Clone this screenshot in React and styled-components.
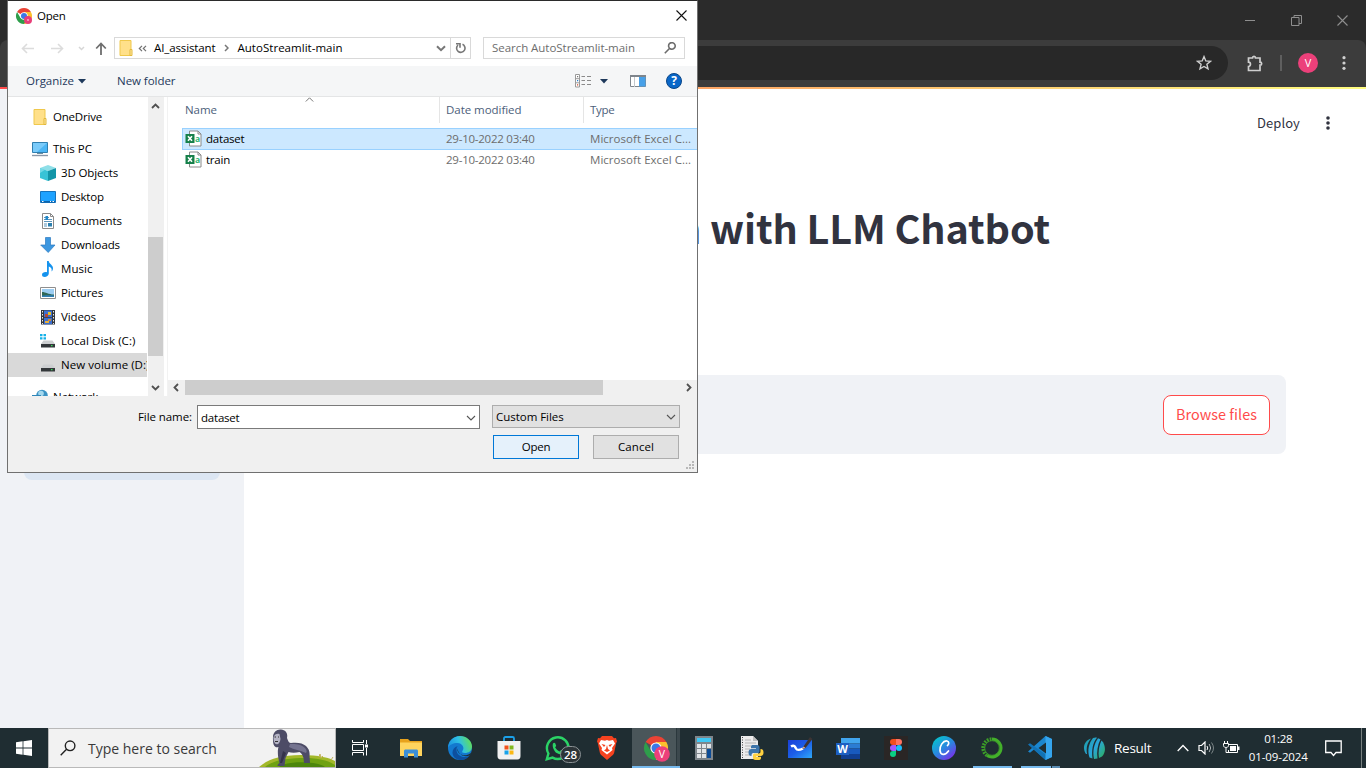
import React from "react";
import styled, { createGlobalStyle } from "styled-components";

const ui = `"Open Sans", "Noto Sans", sans-serif`;
const source = `"Noto Sans CJK JP", "Noto Sans", sans-serif`;

const Global = createGlobalStyle`
  * { box-sizing: border-box; }
  html, body { margin: 0; height: 100%; overflow: hidden; }
  body { font-family: ${ui}; background: #fff; }
  svg { display: block; flex: none; }
`;

const Label = styled.span`
  white-space: nowrap;
  letter-spacing: ${(p) => p.$ls || 0}px;
`;

const Screen = styled.div`
  position: relative;
  display: flex;
  flex-direction: column;
  width: 1366px;
  height: 768px;
  overflow: hidden;
`;

/* ---------- Browser ---------- */

const TabStrip = styled.div`
  height: 40px;
  background: #2b2b2b;
  display: flex;
  justify-content: flex-end;
  align-items: center;
  gap: 35px;
  padding-right: 18px;
`;

const BrowserBar = styled.div`
  height: 47px;
  background: #3c3c3c;
  border-radius: 8px 8px 0 0;
  display: flex;
  align-items: center;
  padding: 0 14px 1px 12px;
`;

const BrowserBarBack = styled.div`
  background: #2b2b2b;
`;

const Omnibox = styled.div`
  width: 1216px;
  height: 34px;
  border-radius: 17px;
  background: #282828;
  display: flex;
  align-items: center;
  justify-content: flex-end;
  padding-right: 16px;
`;

const BarActions = styled.div`
  flex: 1;
  display: flex;
  align-items: center;
  justify-content: flex-end;
`;

const BarDivider = styled.div`
  width: 2px;
  height: 16px;
  background: #5f5f5f;
  margin: 0 16px 0 16px;
`;

const Avatar = styled.div`
  width: 20px;
  height: 20px;
  border-radius: 50%;
  background: #ec407a;
  color: #fff;
  font-size: 11px;
  line-height: 20px;
  text-align: center;
  margin-right: 23px;
`;

const Decoration = styled.div`
  height: 2px;
  background: linear-gradient(90deg, #ff4b4b, #fffd80);
`;

/* ---------- App page ---------- */

const Page = styled.div`
  flex: 1;
  min-height: 0;
  display: flex;
`;

const Aside = styled.div`
  width: 244px;
  background: #f0f2f6;
  padding: 300px 24px 0;
`;

const InfoBox = styled.div`
  height: 91px;
  border-radius: 8px;
  background: #dce6f3;
`;

const Main = styled.div`
  flex: 1;
  display: flex;
  flex-direction: column;
  background: #fff;
`;

const AppHeader = styled.div`
  height: 68px;
  display: flex;
  align-items: center;
  justify-content: flex-end;
  gap: 25px;
  padding-right: 35px;
  font: 400 13px/20px ${source};
  color: #31333f;
`;

const Title = styled.h1`
  margin: 43px 0 0;
  padding-right: 316px;
  height: 57px;
  font: 700 39.6px/54px ${source};
  letter-spacing: -0.13px;
  color: #31333f;
  text-align: right;
  white-space: nowrap;
`;

const Uploader = styled.div`
  margin: 118px 80px 0;
  height: 79px;
  border-radius: 8px;
  background: #f0f2f6;
  display: flex;
  align-items: center;
  justify-content: flex-end;
  padding: 0 16px 0 0;
`;

const Browse = styled.button`
  width: 107px;
  height: 40px;
  padding: 0 0 1px;
  border: 1px solid #ff4b4b;
  border-radius: 8px;
  background: #fff;
  color: #ff4b4b;
  font: 400 14.4px/20px ${source};
`;

/* ---------- File dialog ---------- */

const Dialog = styled.div`
  position: absolute;
  left: 7px;
  top: 0;
  width: 691px;
  height: 473px;
  border: 1px solid #707070;
  border-top-color: #2b2b2b;
  background: #fff;
  display: flex;
  flex-direction: column;
  font-size: 11.5px;
  line-height: 16px;
  color: #000;
`;

const DialogTitle = styled.div`
  height: 30px;
  display: flex;
  align-items: center;
  gap: 5px;
  padding: 0 10px 1px 8px;
  > :last-child { margin-left: auto; }
`;

const NavRow = styled.div`
  height: 35px;
  display: flex;
  align-items: center;
  padding: 0 12px 1px 12px;
`;

const NavArrows = styled.div`
  width: 94px;
  display: flex;
  align-items: center;
`;

const Address = styled.div`
  width: 357px;
  height: 22px;
  border: 1px solid #d9d9d9;
  display: flex;
  align-items: center;
  padding-left: 3px;
`;

const Crumb = styled(Label)`
  margin-left: ${(p) => p.$gap}px;
`;

const AddressEnd = styled.div`
  margin-left: auto;
  display: flex;
  align-items: center;
  height: 100%;
`;

const Refresh = styled.div`
  width: 20px;
  height: 100%;
  border-left: 1px solid #d9d9d9;
  margin-left: 4px;
  display: flex;
  align-items: center;
  justify-content: center;
`;

const SearchField = styled.div`
  margin-left: 12px;
  width: 202px;
  height: 22px;
  border: 1px solid #d9d9d9;
  display: flex;
  align-items: center;
  justify-content: space-between;
  padding: 0 8px 0 8px;
  color: #6d6d6d;
`;

const Toolbar = styled.div`
  height: 31px;
  background: #f5f6f7;
  border-bottom: 1px solid #e4e5e6;
  display: flex;
  align-items: center;
  padding: 0 15px 0 18px;
  color: #1e395b;
`;

const ToolbarRight = styled.div`
  margin-left: auto;
  display: flex;
  align-items: center;
`;

const Gap = styled.div`
  width: ${(p) => p.$w}px;
  flex: none;
`;

const Panes = styled.div`
  height: 299px;
  display: flex;
  overflow: hidden;
`;

const Tree = styled.div`
  width: 139px;
  padding-top: 8px;
  overflow: hidden;
`;

const TreeItem = styled.div`
  height: 24px;
  margin-bottom: ${(p) => (p.$last ? 8 : 0)}px;
  padding-left: ${(p) => (p.$root ? 24 : 32)}px;
  display: flex;
  align-items: center;
  gap: 5px;
  background: ${(p) => (p.$selected ? "#d9d9d9" : "transparent")};
`;

const VScroll = styled.div`
  width: 16px;
  margin-left: 1px;
  background: #f0f0f0;
  display: flex;
  flex-direction: column;
  align-items: center;
  padding-right: 1px;
`;

const VArrow = styled.div`
  height: ${(p) => p.$h}px;
  display: flex;
  align-items: center;
`;

const VThumb = styled.div`
  width: 15px;
  height: 119px;
  background: #cdcdcd;
  align-self: flex-start;
`;

const Splitter = styled.div`
  width: 4px;
  border-right: 1px solid #f2f2f2;
`;

const List = styled.div`
  flex: 1;
  min-width: 0;
  display: flex;
  flex-direction: column;
`;

const ListHead = styled.div`
  height: 26px;
  margin-bottom: 5px;
  display: flex;
  color: #4c607a;
`;

const HeadCell = styled.div`
  position: relative;
  width: ${(p) => p.$w}px;
  border-right: ${(p) => (p.$end ? "0" : "1px solid #e5e5e5")};
  padding: 5px 0 0 ${(p) => p.$pad}px;
`;

const SortMark = styled.div`
  position: absolute;
  left: 137px;
  top: 0;
`;

const FileRow = styled.div`
  height: ${(p) => (p.$selected ? 22 : 20)}px;
  margin-left: 14px;
  border: 1px solid ${(p) => (p.$selected ? "#99d1ff" : "transparent")};
  border-right: 0;
  background: ${(p) => (p.$selected ? "#cce8ff" : "transparent")};
  display: flex;
  align-items: center;
  color: #6d6d6d;
`;

const FileName = styled.div`
  width: 263px;
  padding: 0 0 1px 2px;
  display: flex;
  align-items: center;
  gap: 4px;
  color: #000;
  > span { padding-top: 1px; }
`;

const FileDate = styled.div`
  width: 144px;
`;

const HScroll = styled.div`
  margin-top: auto;
  height: 16px;
  background: #f0f0f0;
  display: flex;
  align-items: center;
  padding: 0 5px 1px 5px;
`;

const HThumb = styled.div`
  width: 418px;
  height: 15px;
  margin: 0 auto 0 6px;
  background: #cdcdcd;
`;

const Footer = styled.div`
  position: relative;
  flex: 1;
  background: #f0f0f0;
  padding: 9px 17px 0 130px;
`;

const FieldRow = styled.div`
  display: flex;
  align-items: flex-start;
  height: 24px;
  > span { line-height: 24px; width: 59px; }
`;

const NameField = styled.div`
  width: 283px;
  height: 24px;
  border: 1px solid #7a7a7a;
  background: #fff;
  display: flex;
  align-items: center;
  justify-content: space-between;
  padding: 1px 3px 0 3px;
`;

const TypeField = styled.div`
  margin-left: 12px;
  width: 188px;
  height: 23px;
  border: 1px solid #adadad;
  background: #e1e1e1;
  display: flex;
  align-items: center;
  justify-content: space-between;
  padding: 0 3px 0 3px;
`;

const ButtonRow = styled.div`
  margin-top: 6px;
  padding-right: 1px;
  display: flex;
  justify-content: flex-end;
  gap: 14px;
`;

const DialogButton = styled.button`
  width: 86px;
  height: 24px;
  padding: 0;
  border: 1px solid ${(p) => (p.$primary ? "#0078d7" : "#adadad")};
  background: ${(p) => (p.$primary ? "#e5f1fb" : "#e1e1e1")};
  font: 400 11.5px/20px ${ui};
  color: #000;
`;

const Grip = styled.div`
  position: absolute;
  right: 2px;
  bottom: 2px;
`;

/* ---------- Taskbar ---------- */

const Taskbar = styled.div`
  height: 40px;
  background: #1f2d32;
  display: flex;
  align-items: stretch;
  color: #fff;
`;

const Slot = styled.div`
  position: relative;
  width: 48px;
  display: flex;
  align-items: center;
  justify-content: center;
  padding-left: ${(p) => Math.max(0, p.$shift || 0)}px;
  padding-right: ${(p) => Math.max(0, -(p.$shift || 0))}px;
`;

const ActiveSlot = styled(Slot)`
  background: linear-gradient(90deg, #4a565a 0 44px, #2b383d 44px 45px, #3c484d 45px);
`;

const Underline = styled.div`
  position: absolute;
  left: ${(p) => p.$x}px;
  bottom: 0;
  width: ${(p) => p.$w}px;
  height: 2px;
  background: ${(p) => p.$c || "#76b9ed"};
`;

const Badge = styled.div`
  position: absolute;
  left: 28px;
  top: 18px;
  width: 21px;
  height: 17px;
  border: 1px solid #8b9295;
  border-radius: 9px;
  background: #2c3438;
  font: 600 11.5px/15px ${ui};
  text-align: center;
`;

const TaskSearch = styled.div`
  width: 288px;
  background: #f2f2f2;
  border: 1px solid #b9b9b9;
  display: flex;
  align-items: center;
  padding-left: 11px;
  font-size: 14px;
  color: #3a3a3a;
  gap: 12px;
  > :last-child { margin-left: auto; align-self: flex-end; }
`;

const Tray = styled.div`
  flex: 1;
  display: flex;
  align-items: center;
  padding-left: 19px;
  font-size: 13.5px;
`;

const Clock = styled.div`
  width: 62px;
  margin-left: 7px;
  display: flex;
  flex-direction: column;
  align-items: center;
  font-size: 11.5px;
  line-height: 18px;
  padding-bottom: 1px;
`;

const ShowDesktop = styled.div`
  margin-left: auto;
  width: 5px;
  border-left: 1px solid #77807f;
  align-self: stretch;
`;

/* ---------- Icons ---------- */

const Stroke = ({ w, h, d, c = "#555", s = 1.5, fill = "none" }) => (
  <svg width={w} height={h} viewBox={`0 0 ${w} ${h}`} fill={fill} stroke={c} strokeWidth={s}>
    <path d={d} />
  </svg>
);

const Dots = ({ c, r, step, h }) => (
  <svg width="6" height={h} viewBox={`0 0 6 ${h}`} fill={c}>
    {[-1, 0, 1].map((i) => (
      <circle key={i} cx="3" cy={h / 2 + i * step} r={r} />
    ))}
  </svg>
);

const ChromeIcon = ({ size, letter }) => (
  <svg width={size} height={size} viewBox="0 0 24 24" overflow="visible">
    <path d="M12 12L1.6 6A12 12 0 0 1 22.4 6z" fill="#ea4335" />
    <path d="M12 12V6h10.4A12 12 0 0 1 12 24z" fill="#fbc02d" />
    <path d="M12 12l5.2 3L12 24A12 12 0 0 1 1.6 6l5.2 9z" fill="#2e9e4b" />
    <circle cx="12" cy="12" r="5.6" fill="#fff" />
    <circle cx="12" cy="12" r="4.5" fill="#3b78e7" />
    {letter ? (
      <>
        <circle cx="18" cy="18" r="7.8" fill="#ec407a" />
        <text x="18" y="22" fontSize="10.5" fill="#fff" textAnchor="middle" fontFamily="Open Sans">V</text>
      </>
    ) : (
      <>
        <circle cx="18" cy="18" r="6" fill="#e83e78" />
        <circle cx="18" cy="18" r="1.6" fill="#f7a8c3" />
      </>
    )}
  </svg>
);

const Folder = () => (
  <svg width="16" height="18" viewBox="0 0 16 18">
    <path d="M2 1.500h11v15H2z" fill="#ffe08a" stroke="#efc84c" />
    <path d="M12 10.500h2v6h-2z" fill="#ffe9a6" stroke="#e3b93c" />
  </svg>
);

const PcIcon = () => (
  <svg width="16" height="16" viewBox="0 0 16 16">
    <path d="M.5 1.500h15v10H.5z" fill="#4cb6f5" stroke="#2f7fb0" />
    <path d="M1 2h14L5 11H1z" fill="#7acbfa" />
    <path d="M5 12h6v1H5z" fill="#6b8ca0" />
    <path d="M0 14.500h16" stroke="#8a97a8" strokeWidth="1.400" />
  </svg>
);

const CubeIcon = () => (
  <svg width="16" height="16" viewBox="0 0 16 16">
    <path d="M0 3l8-3 8 3-8 3z" fill="#8fdfe8" />
    <path d="M0 3l8 3v10l-8-3z" fill="#38c3d6" />
    <path d="M16 3L8 6v10l8-3z" fill="#1295a8" />
    <path d="M0 3l5 1.800L0 8z" fill="#72d9e6" />
  </svg>
);

const DesktopIcon = () => (
  <svg width="16" height="16" viewBox="0 0 16 16">
    <path d="M.5 2.500h15v11H.5z" fill="#1ea2ff" stroke="#1673bd" />
    <path d="M1 12h14v1.500H1z" fill="#0b64ac" />
    <path d="M2 12.500h1.500M10 12.500h1M12.500 12.500H14" stroke="#fff" />
  </svg>
);

const DocIcon = () => (
  <svg width="16" height="16" viewBox="0 0 16 16">
    <path d="M2.500.5h8l3 3v12h-11z" fill="#fff" stroke="#8a8a8a" />
    <path d="M10.500.5v3h3" fill="none" stroke="#8a8a8a" />
    <path d="M4 4.500h2M8 4.500h1M4 6.500h8M4 8.500h8M4 11h3M4 13h3" stroke="#5b95bb" />
    <path d="M5.500 3H8v4H5.500z" fill="#2188c9" />
    <path d="M8 10h4v3.500H8z" fill="#2c7fae" />
  </svg>
);

const DownIcon = () => (
  <svg width="16" height="16" viewBox="0 0 16 16">
    <path d="M5.500.5h5v7.500h4.500L8.200 15.500.7 8H5.500z" fill="#3c97e0" stroke="#2c7ac0" strokeWidth=".7" />
  </svg>
);

const MusicIcon = () => (
  <svg width="16" height="16" viewBox="0 0 16 16">
    <path d="M7 0h1.700c.3 3 4.600 4 4.300 7.500-.1 1.500-.8 2.500-1.500 3 .8-2.500-.5-4.300-2.700-5V12.500C8.700 14.700 6.500 16 4.700 16 3 16 2 15 2 13.700 2 11.800 4.500 10.500 7 11.200z" fill="#1593ee" />
  </svg>
);

const PictureIcon = () => (
  <svg width="16" height="16" viewBox="0 0 16 16">
    <path d="M.5 2.500h15v11H.5z" fill="#fff" stroke="#8e8e8e" />
    <path d="M2 4h12v8H2z" fill="#9ccdf2" />
    <path d="M2 7c4 0 6 2.500 12 2.500V12H2z" fill="#2f6757" />
    <path d="M2 10.500c5 0 7-.5 12 0V12H2z" fill="#2f7fb5" />
  </svg>
);

const VideoIcon = () => (
  <svg width="16" height="16" viewBox="0 0 16 16">
    <path d="M1 1h14v14.500H1z" fill="#33373b" />
    <path d="M4 1.500h8v6.500H4zM4 8.800h8v6.500H4z" fill="#3c6fd0" />
    <path d="M8 3h3v3H8z" fill="#e8c026" />
    <path d="M5 5h3v3H5z" fill="#b0463b" />
    <path d="M8 10h3v2H8z" fill="#d88b2a" />
    <path d="M5 12h4v2H5z" fill="#e8b03a" />
    <path d="M2.500 2v13M13.500 2v13" stroke="#e8e8e8" strokeDasharray="1.500 1.500" />
  </svg>
);

const DiskIcon = ({ win }) => (
  <svg width="16" height="16" viewBox="0 0 16 16">
    {win && <path d="M0 1h2.500v2.300H0zM3.500 1H6v2.300H3.500zM0 4.300h2.500v2.300H0zM3.500 4.300H6v2.300H3.500z" fill="#16b1e8" />}
    <path d="M3.500 7.500h9l2.500 3.500H1z" fill="#cdcfd1" />
    <path d="M1 11h14v3.500H1z" fill="#33373a" />
    <path d="M11 12h1.500v1.300H11z" fill="#38e05a" />
  </svg>
);

const NetworkIcon = () => (
  <svg width="16" height="16" viewBox="0 0 16 16">
    <circle cx="10" cy="6.500" r="5.800" fill="#3b93c4" />
    <circle cx="9" cy="4.500" r="2.800" fill="#a4d8ee" />
    <path d="M0 6h9v7H0z" fill="#2e86b8" />
  </svg>
);

const ExcelIcon = () => (
  <svg width="17" height="17" viewBox="0 0 17 17">
    <path d="M4.500 1h8.500l3 3v12h-11.500z" fill="#fff" stroke="#8a8a8a" />
    <path d="M13 1v3h3" fill="none" stroke="#8a8a8a" />
    <path d="M.5 4h9v9h-9z" fill="#15804a" />
    <path d="M3 6.300l4 4.500M7 6.300l-4 4.500" stroke="#fff" strokeWidth="1.600" />
    <text x="10" y="11.500" fontSize="8.500" fontWeight="700" fill="#2fb574" fontFamily="Open Sans">a</text>
  </svg>
);

const ViewIcon = () => (
  <svg width="17" height="14" viewBox="0 0 17 14">
    <path d="M.5.5h4v12.500h-4zM.5 4.700h4M.5 8.800h4" fill="#fff" stroke="#9a9a9a" />
    <path d="M2 2h1.200v1.200H2z" fill="#777" />
    <path d="M2 6h1.200v1.200H2z" fill="#2a7fd0" />
    <path d="M2 10.200h1.200v1.200H2z" fill="#d04a2a" />
    <path d="M6.500 2.500H10M12 2.500h4M6.500 6.500H10M12 6.500h4M6.500 10.500H10M12 10.500h4" stroke="#8a8a8a" />
  </svg>
);

const PaneIcon = () => (
  <svg width="16" height="12" viewBox="0 0 16 12">
    <path d="M.5.5h15v11H.5z" fill="#fff" stroke="#7e858c" />
    <path d="M0 0h16v2H0z" fill="#7e858c" />
    <path d="M4.500 2v10" stroke="#c4c8cc" />
    <path d="M9 2h6.500v9.500H9z" fill="#47a0e8" />
  </svg>
);

const HelpIcon = () => (
  <svg width="16" height="16" viewBox="0 0 16 16">
    <circle cx="8" cy="8" r="7.500" fill="#0a67c8" stroke="#0a4688" />
    <text x="8" y="12.300" fontSize="12" fontWeight="700" fill="#fff" textAnchor="middle" fontFamily="Open Sans">?</text>
  </svg>
);

const GripIcon = () => (
  <svg width="10" height="9" viewBox="0 0 10 9" fill="#b8b8b8">
    <path d="M7 0h2v2H7zM4 3h2v2H4zM7 3h2v2H7zM1 6h2v2H1zM4 6h2v2H4zM7 6h2v2H7z" />
  </svg>
);

const WindowsIcon = () => (
  <svg width="16" height="16" viewBox="0 0 16 16" fill="#fff">
    <path d="M0 2.200l6.600-.9v6.200H0zM7.400 1.200L16 0v7.500H7.400zM0 8.400h6.600v6.300L0 13.800zM7.400 8.400H16V16l-8.600-1.200z" />
  </svg>
);

const Gorilla = () => (
  <svg width="76" height="38" viewBox="0 0 76 38">
    <path d="M0 38C8 31 20 26 42 26c18 0 29 3 34 6v6z" fill="#a3b82a" />
    <path d="M6 38c8-7 24-9 40-9 14 0 24 3 30 7v2z" fill="#6fa212" />
    <path d="M20 38c4-4 20-6 34-4 6 1 10 2 12 4z" fill="#4c860c" />
    <path d="M60 28l1-3 1 4 2-2M72 31l2-3" stroke="#c2b35c" fill="none" />
    <path d="M14 8c0-5 4-8 8-7.500 5 .5 7 4 6 8.500 1 3 2 5 4 5 6-1 12 0 15 3 3 3 4 6 3.500 10l.5 7h-6l-.5-5c-1-3-2-5-4-6-4 1-8 1-11 0l-3 6-1 8h-7c0-2 1-2 2-3-2-7-2-13-1-16-3 1-6 0-5.500-10z" fill="#4d4c66" />
    <path d="M31 15c6 0 11 0 15 4 2 2 2 4 1 5-6-3-12-3-17-6z" fill="#74738f" />
    <path d="M24 22l3 2-4 10h-2z" fill="#34334a" />
    <path d="M14.500 8c1-3 4-4 6-3l1 5c-.5 4-2.500 6-4.500 5-2-.5-2.500-4-2.500-7z" fill="#b4b3c4" />
    <path d="M15.500 8h1.500M19 8h1M16 12.500h3" stroke="#333" />
  </svg>
);

const TaskViewIcon = () => (
  <svg width="17" height="16" viewBox="0 0 17 16" fill="none" stroke="#fff">
    <path d="M.5 0v2.500h11V0M.5 4.500h11v6H.5zM.5 15.500v-3h11v3M14.500 0v4M14.500 8v7.500" />
    <path d="M13 4.500h3v3h-3z" fill="#fff" stroke="none" />
  </svg>
);

const ExplorerIcon = () => (
  <svg width="22" height="19" viewBox="0 0 22 19">
    <path d="M0 0h8l2 2h12v5H0z" fill="#e8a21c" />
    <path d="M0 3.500h22V17H0z" fill="#ffd45e" />
    <path d="M4 18.500V12c0-1 .8-1.500 1.500-1.500h11c1 0 1.500.6 1.500 1.500v6.500h-4v-4H8v4z" fill="#3c8fd8" />
  </svg>
);

const EdgeIcon = () => (
  <svg width="24" height="24" viewBox="0 0 24 24">
    <defs>
      <linearGradient id="edgeA" x1="0" y1=".6" x2="1" y2=".3">
        <stop offset="0" stopColor="#1a8fe0" />
        <stop offset=".5" stopColor="#2fc0e4" />
        <stop offset="1" stopColor="#66e04e" />
      </linearGradient>
    </defs>
    <circle cx="12" cy="12" r="12" fill="#1379cf" />
    <path d="M0 12C0 5 5.500 0 12 0s12 5 12 10.500C24 15 20.500 17 17 17c-2.500 0-3.600-1-2.500-2.300 2.500-3-.5-7.700-5-7.700C5 7 1 9 0 12z" fill="url(#edgeA)" />
    <path d="M8.500 13c-.5 5 4 8.500 9 8 1.500 0 3-.8 4-1.500C18 25 10 25.500 6 21c-3-4-1.500-9.500 4-11-1 .8-1.400 1.700-1.500 3z" fill="#0d4f9e" />
    <path d="M9.200 12.500c-.2 4.500 4.500 7.500 9 6.700 2-.2 3.800-1.500 4.800-2.700 0 2-1.500 3-1.500 3-5 2-10.500 0-12.300-7z" fill="#1f2d32" />
  </svg>
);

const StoreIcon = () => (
  <svg width="24" height="24" viewBox="0 0 24 24">
    <path d="M7 7V2.500C7 1.500 7.500 1 8.500 1h7c1 0 1.500.5 1.500 1.500V7" fill="none" stroke="#1ba0e8" strokeWidth="1.800" />
    <path d="M.5 5h23v15c0 2-1 3.500-3 3.500h-17c-2 0-3-1.500-3-3.500z" fill="#f1f1f1" />
    <path d="M7.500 9.500h4v4h-4z" fill="#f1511b" />
    <path d="M12.500 9.500h4v4h-4z" fill="#80b81f" />
    <path d="M7.500 14.500h4v4h-4z" fill="#18a3ea" />
    <path d="M12.500 14.500h4v4h-4z" fill="#fbb813" />
  </svg>
);

const WhatsAppIcon = () => (
  <svg width="26" height="25" viewBox="0 0 26 25">
    <path d="M1.800 23.200l1.600-5.700A10.800 10.800 0 1 1 7.600 21.600z" fill="#1f2d32" stroke="#2bd366" strokeWidth="2.400" />
    <path d="M8 7.500c.5-1 1.800-1.200 2.200-.2l.9 2.100c.2.6-.7 1.300-1 1.800 1 2 2.500 3.300 4.600 4.200.6-.4 1.100-1.500 1.700-1.300l2.300 1.200c.5.300.2 1.700-.5 2.400-1.500 1.500-4.200.8-6.500-.6C9.500 15.600 6.800 11 8 7.500z" fill="#2bd366" />
  </svg>
);

const BraveIcon = () => (
  <svg width="20" height="24" viewBox="0 0 20 24">
    <path d="M5 0h10l2 2.200 2-.2 1 3.500-.8 1.500-2 9.500c-.4 1.500-1 2.300-2 3L10 24l-5.200-4.500c-1-.7-1.600-1.500-2-3L.8 7 0 5.500 1 2l2 .2z" fill="#f5421f" />
    <path d="M4 4l4 .8L10 4l2 .8L16 4l2 3.500-3 4.500.5 2-3 2.500L10 18.500 7.500 16.500l-3-2.500.5-2-3-4.500z" fill="#fff" />
    <path d="M4.500 8l4 1-1.500 2zM15.500 8l-4 1 1.500 2zM10 9l1 4 2 1.500-3 1.500-3-1.500L9 13z" fill="#f5421f" />
  </svg>
);

const CalcIcon = () => (
  <svg width="18" height="24" viewBox="0 0 18 24">
    <path d="M0 0h18v24H0z" fill="#7e868c" />
    <path d="M2 2h14v4H2z" fill="#40c8f4" />
    <path d="M2 8h4v4H2zM7 8h4v4H7zM12 8h4v4h-4zM2 13h4v4H2zM7 13h4v4H7zM2 18h4v4H2zM7 18h4v4H7z" fill="#e2e5e8" />
    <path d="M12 13h4v9h-4z" fill="#0c4c96" />
  </svg>
);

const PyIcon = () => (
  <svg width="24" height="24" viewBox="0 0 24 24">
    <path d="M1 0h12l5 5v18H1z" fill="#ececec" />
    <path d="M13 0l5 5h-5z" fill="#bdbdbd" />
    <path d="M2.500 1v21" stroke="#444" strokeDasharray="1 1.500" />
    <path d="M5 4h6M5 7h11M5 10h8M5 13h5M5 16h5M5 19h6" stroke="#b5b5b5" />
    <path d="M13 9h4c2 0 2.500 1 2.500 2.500V15c0 1.500-1 2-2 2h-4c-1.500 0-2 1-2 3-2 0-3-1-3-3.500S9.500 13 11.500 13H16v-.8h-5V11c0-1.500 1-2 2-2z" fill="#3d75aa" />
    <path d="M20.500 13c2.500 0 3 1.500 3 3.500s-1 3.500-3 3.500H16v.8h5V22c0 1.500-1 2-2.500 2h-3c-1.500 0-2.500-.8-2.500-2v-2.500c0-1.500 1-2 2-2h3.500c1.500 0 2-1 2-2z" fill="#ffd140" />
  </svg>
);

const WhiteboardIcon = () => (
  <svg width="25" height="22" viewBox="0 0 25 22">
    <defs>
      <linearGradient id="wb" x1="0" y1="0" x2="1" y2="1">
        <stop offset="0" stopColor="#1a3fd8" />
        <stop offset=".5" stopColor="#1c5ee8" />
        <stop offset="1" stopColor="#2fa8f8" />
      </linearGradient>
    </defs>
    <path d="M0 3h24v18H0z" fill="url(#wb)" />
    <path d="M3 9.500c3-2 4 0 5 2s3 2 7 0" fill="none" stroke="#fff" strokeWidth="2.400" />
    <path d="M15.500 9.500L22 0l2.500 2-7 9-3 1z" fill="#3c3434" />
    <path d="M15.500 9.500l2 1.500-3 .8z" fill="#e8b090" />
  </svg>
);

const WordIcon = () => (
  <svg width="24" height="21" viewBox="0 0 24 21">
    <path d="M5 0h19v5.500H5z" fill="#41a5ee" />
    <path d="M5 5.500h19v5H5z" fill="#2b7cd3" />
    <path d="M5 10.500h19v5.500H5z" fill="#185abd" />
    <path d="M5 16h19v5H5z" fill="#103f91" />
    <path d="M0 5h13v12H0z" fill="#1d5fc2" />
    <text x="6.500" y="15" fontSize="11" fontWeight="700" fill="#fff" textAnchor="middle" fontFamily="Open Sans">W</text>
  </svg>
);

const FigmaIcon = () => (
  <svg width="24" height="24" viewBox="0 0 24 24">
    <path d="M0 0h24v24H0z" fill="#2a2625" />
    <path d="M12 3H9a3 3 0 0 0 0 6h3z" fill="#f24e1e" />
    <path d="M12 3h3a3 3 0 0 1 0 6h-3z" fill="#ff7262" />
    <path d="M12 9H9a3 3 0 0 0 0 6h3z" fill="#a259ff" />
    <circle cx="15" cy="12" r="3" fill="#1abcfe" />
    <path d="M12 15H9a3 3 0 1 0 3 3z" fill="#0acf83" />
  </svg>
);

const CanvaIcon = () => (
  <svg width="24" height="24" viewBox="0 0 24 24">
    <defs>
      <linearGradient id="canva" x1=".1" y1=".1" x2=".8" y2="1">
        <stop offset="0" stopColor="#05c3cc" />
        <stop offset=".5" stopColor="#2b86e0" />
        <stop offset="1" stopColor="#7d2ae8" />
      </linearGradient>
    </defs>
    <circle cx="12" cy="12" r="12" fill="url(#canva)" />
    <path d="M15.500 9.500c1.500-1 2-4-.5-4.500-4-.5-7.500 5-7 9.500.3 4.500 5 5.500 8.500.5" fill="none" stroke="#fff" strokeWidth="1.700" strokeLinecap="round" />
  </svg>
);

const AnacondaIcon = () => (
  <svg width="22" height="22" viewBox="0 0 22 22" fill="none">
    <path d="M11 2a9 9 0 1 1-5 16.500" stroke="#43b02a" strokeWidth="3" />
    <path d="M6 18.500A9 9 0 0 1 11 2" stroke="#3c9e28" strokeWidth="3.400" strokeDasharray="1.800 1.100" />
    <circle cx="11" cy="11" r="7.300" stroke="#43b02a" strokeWidth=".7" />
  </svg>
);

const VsCodeIcon = () => (
  <svg width="24" height="24" viewBox="0 0 24 24">
    <path d="M17.500 0L24 3v18l-6.500 3L6 13.500l-4 3.200L0 15.500 17.500 0z" fill="#1b86cf" />
    <path d="M17.500 24L0 8.500l2-1.300 16 11.500z" fill="#1272b5" />
    <path d="M17.500 0L24 3v18l-6.500 3z" fill="#35a5ee" />
    <path d="M18 6.500v11L10.500 12z" fill="#1f2d32" />
  </svg>
);

const ResultIcon = () => (
  <svg width="22" height="22" viewBox="0 0 22 22">
    <defs>
      <linearGradient id="globe" gradientUnits="userSpaceOnUse" x1="0" y1="4" x2="22" y2="20">
        <stop offset="0" stopColor="#1c9ca6" />
        <stop offset=".5" stopColor="#2aa6dc" />
        <stop offset="1" stopColor="#2cae5c" />
      </linearGradient>
    </defs>
    <g fill="url(#globe)">
      <path d="M3 17C-1 11 1 4 8 1.500 4 6 3 11 4 17z" />
      <path d="M6.500 20.500C4 13 6 6 10 1c2-.8 3-.6 4-.3C9.500 6 8.500 13 9.500 21.500z" />
      <path d="M11 22C9.500 14 11 7 15 1.200l2.500 1C14.500 8 13.500 15 14.500 21.500z" />
      <path d="M16 21c-1-6 0-12 2.500-17.500C23 8 23 15.500 19 19.500z" />
    </g>
  </svg>
);

const VolumeIcon = () => (
  <svg width="17" height="14" viewBox="0 0 17 14" fill="none" stroke="#fff">
    <path d="M1 4.500h2.500L7 1v12L3.500 9.500H1z" strokeWidth="1.200" />
    <path d="M9 5q1.500 2 0 4" />
    <path d="M11.200 3q3 4 0 8" stroke="#aab0b2" />
    <path d="M13.500 1.500q4 5.500 0 11" stroke="#7d8688" />
  </svg>
);

const BatteryIcon = () => (
  <svg width="17" height="14" viewBox="0 0 17 14" fill="none" stroke="#fff">
    <path d="M6 3.500h8.500v8H5.500V9" />
    <path d="M15 5.500h1.500v3.500H15z" fill="#fff" stroke="none" />
    <path d="M7 5h6v5H7z" fill="#fff" stroke="none" />
    <path d="M1.500 0v2M4.500 0v2M.5 2.500h5v2C5.500 6 4 6.500 3 6.500S.5 6 .5 4.500zM3 6.500V11.500h3" />
  </svg>
);

const tree = [
  ["OneDrive", -0.2, <Folder />, "root", true],
  ["This PC", 0.01, <PcIcon />, "root"],
  ["3D Objects", -0.13, <CubeIcon />],
  ["Desktop", -0.24, <DesktopIcon />],
  ["Documents", -0.06, <DocIcon />],
  ["Downloads", -0.11, <DownIcon />],
  ["Music", 0.08, <MusicIcon />],
  ["Pictures", -0.14, <PictureIcon />],
  ["Videos", -0.11, <VideoIcon />],
  ["Local Disk (C:)", 0.06, <DiskIcon win />],
  ["New volume (D:)", 0.04, <DiskIcon />, "", true],
  ["Network", -0.1, <NetworkIcon />, "root"],
];

const files = [["dataset", -0.21], ["train", -0.23]];

function FileDialog() {
  return (
    <Dialog>
      <DialogTitle>
        <ChromeIcon size={16} />
        <Label $ls={-0.2}>Open</Label>
        <Stroke w={11} h={11} d="M.5.5l10 10M10.500.5l-10 10" c="#111" s={1.1} />
      </DialogTitle>
      <NavRow>
        <NavArrows>
          <Gap $w={1} />
          <Stroke w={13} h={11} d="M13 5.500H1.500M6 1L1.500 5.500 6 10" c="#dcdcdc" s={1.6} />
          <Gap $w={17} />
          <Stroke w={13} h={11} d="M0 5.500h11.500M7 1l4.500 4.500L7 10" c="#dcdcdc" s={1.6} />
          <Gap $w={14} />
          <Stroke w={7} h={5} d="M1 1l2.500 2.500L6 1" c="#d6d6d6" />
          <Gap $w={10} />
          <Stroke w={12} h={13} d="M6 13V1.500M1.200 6.500L6 1.500l4.800 5" c="#6e6e6e" s={1.8} />
        </NavArrows>
        <Address>
          <Folder />
          <Gap $w={4} />
          <Stroke w={9} h={7} d="M4 .8L1.300 3.500 4 6.200M8 .8L5.300 3.500 8 6.200" c="#707070" s={1.2} />
          <Crumb $gap={7} $ls={-0.12}>AI_assistant</Crumb>
          <Gap $w={9} />
          <Stroke w={5} h={8} d="M1 1l3 3-3 3" c="#777" />
          <Crumb $gap={8} $ls={0.03}>AutoStreamlit-main</Crumb>
          <AddressEnd>
            <Stroke w={10} h={7} d="M1 1.200l4 4 4-4" c="#777" s={2} />
            <Refresh>
              <Stroke w={11} h={12} d="M7.500 2.300A4.200 4.200 0 1 1 3 3M1 1.700h4v4" c="#777" s={1.6} />
            </Refresh>
          </AddressEnd>
        </Address>
        <SearchField>
          <Label $ls={-0.04}>Search AutoStreamlit-main</Label>
          <Stroke w={12} h={12} d="M4.600 4.300a3.300 3.300 0 1 1 6 1.500 3.300 3.300 0 0 1-6-1.500zM5.200 6.800L.8 11.200" c="#6d6d6d" s={1.6} />
        </SearchField>
      </NavRow>
      <Toolbar>
        <Label $ls={-0.01}>Organize</Label>
        <Gap $w={4} />
        <Stroke w={8} h={5} d="M0 0h8L4 4.500z" c="none" fill="#1e395b" />
        <Gap $w={31} />
        <Label $ls={-0.04}>New folder</Label>
        <ToolbarRight>
          <ViewIcon />
          <Gap $w={8} />
          <Stroke w={8} h={5} d="M0 0h8L4 4.500z" c="none" fill="#1e395b" />
          <Gap $w={22} />
          <PaneIcon />
          <Gap $w={20} />
          <HelpIcon />
        </ToolbarRight>
      </Toolbar>
      <Panes>
        <Tree>
          {tree.map(([name, ls, icon, kind, last]) => (
            <TreeItem key={name} $root={kind === "root"} $last={last} $selected={name.startsWith("New")}>
              {icon}
              <Label $ls={ls}>{name}</Label>
            </TreeItem>
          ))}
        </Tree>
        <VScroll>
          <VArrow $h={18}><Stroke w={9} h={6} d="M1 5l3.500-3.500L8 5" c="#505050" s={1.8} /></VArrow>
          <VArrow $h={122} />
          <VThumb />
          <VArrow $h={29} />
          <Stroke w={9} h={6} d="M1 1l3.500 3.500L8 1" c="#505050" s={1.8} />
        </VScroll>
        <Splitter />
        <List>
          <ListHead>
            <HeadCell $w={272} $pad={17}>
              <Label $ls={-0.04}>Name</Label>
              <SortMark><Stroke w={9} h={5} d="M.8 4.500L4.500.8l3.700 3.700" c="#777" s={1} /></SortMark>
            </HeadCell>
            <HeadCell $w={144} $pad={6}><Label $ls={-0.04}>Date modified</Label></HeadCell>
            <HeadCell $w={113} $pad={6} $end><Label $ls={-0.3}>Type</Label></HeadCell>
          </ListHead>
          {files.map(([name, ls], i) => (
            <FileRow key={name} $selected={i === 0}>
              <FileName>
                <ExcelIcon />
                <Label $ls={ls}>{name}</Label>
              </FileName>
              <FileDate><Label $ls={-0.24}>29-10-2022 03:40</Label></FileDate>
              <Label $ls={0.04}>Microsoft Excel C...</Label>
            </FileRow>
          ))}
          <HScroll>
            <Stroke w={6} h={9} d="M5 1L1.500 4.500 5 8" c="#505050" s={1.8} />
            <HThumb />
            <Stroke w={6} h={9} d="M1 1l3.500 3.500L1 8" c="#505050" s={1.8} />
          </HScroll>
        </List>
      </Panes>
      <Footer>
        <FieldRow>
          <Label $ls={-0.08}>File name:</Label>
          <NameField>
            <Label $ls={-0.21}>dataset</Label>
            <Stroke w={10} h={6} d="M1 1l4 4 4-4" c="#555" s={1.1} />
          </NameField>
          <TypeField>
            <Label $ls={-0.03}>Custom Files</Label>
            <Stroke w={10} h={6} d="M1 1l4 4 4-4" c="#555" s={1.1} />
          </TypeField>
        </FieldRow>
        <ButtonRow>
          <DialogButton $primary><Label $ls={-0.2}>Open</Label></DialogButton>
          <DialogButton><Label $ls={0.07}>Cancel</Label></DialogButton>
        </ButtonRow>
        <Grip><GripIcon /></Grip>
      </Footer>
    </Dialog>
  );
}

export default function App() {
  return (
    <>
      <Global />
      <Screen>
        <TabStrip>
          <Stroke w={11} h={11} d="M0 5.500h10" c="#8f8f8f" s={1} />
          <Stroke w={11} h={11} d="M.5 2.500h7.500v8H.5zM3 2.500v-2h7.500v8H8" c="#8f8f8f" s={1} />
          <Stroke w={11} h={11} d="M.5.5l10 10M10.500.5l-10 10" c="#8f8f8f" s={1.1} />
        </TabStrip>
        <BrowserBarBack>
          <BrowserBar>
            <Omnibox>
              <Stroke w={16} h={16} d="M8 1.600l1.800 4.300 4.700.4-3.600 3 1.100 4.600L8 11.500l-4 2.400 1.100-4.600-3.600-3 4.700-.4z" c="#d0d0d0" s={1.4} />
            </Omnibox>
            <BarActions>
              <Stroke w={18} h={17} d="M2.500 3h4c0-2.200 3-2.200 3 0h4.500v4.200c2.200 0 2.200 3 0 3V15.500H2.500v-4c2.600 0 2.600-4.300 0-4.300z" c="#cfcfcf" s={1.7} />
              <BarDivider />
              <Avatar>V</Avatar>
              <Dots c="#d0d0d0" r={1.6} step={5.3} h={18} />
              <Gap $w={5} />
            </BarActions>
          </BrowserBar>
        </BrowserBarBack>
        <Decoration />
        <Page>
          <Aside><InfoBox /></Aside>
          <Main>
            <AppHeader>
              <Label $ls={0.1}>Deploy</Label>
              <Dots c="#31333f" r={1.8} step={5} h={16} />
            </AppHeader>
            <Title>n with LLM Chatbot</Title>
            <Uploader>
              <Browse><Label $ls={0.05}>Browse files</Label></Browse>
            </Uploader>
          </Main>
        </Page>
        <Taskbar>
          <Slot><WindowsIcon /></Slot>
          <TaskSearch>
            <Stroke w={16} h={16} d="M5.300 5.800a4.800 4.800 0 1 1 9.600 0 4.800 4.800 0 0 1-9.600 0zM6.500 9.300L.7 15.200" c="#222" s={1.4} />
            <Label>Type here to search</Label>
            <Gorilla />
          </TaskSearch>
          <Slot><TaskViewIcon /></Slot>
          <Gap $w={4} />
          <Slot $shift={-2}><ExplorerIcon /></Slot>
          <Slot><EdgeIcon /></Slot>
          <Slot $shift={1}><StoreIcon /></Slot>
          <Slot $shift={4}>
            <WhatsAppIcon />
            <Badge>28</Badge>
          </Slot>
          <Slot $shift={6}><BraveIcon /></Slot>
          <Gap $w={4} />
          <ActiveSlot>
            <ChromeIcon size={24} letter />
            <Underline $x={0} $w={48} />
          </ActiveSlot>
          <Slot><CalcIcon /></Slot>
          <Slot><PyIcon /></Slot>
          <Slot><WhiteboardIcon /></Slot>
          <Slot><WordIcon /></Slot>
          <Slot><FigmaIcon /></Slot>
          <Slot><CanvaIcon /></Slot>
          <Slot>
            <AnacondaIcon />
            <Underline $x={5} $w={39} />
          </Slot>
          <Slot>
            <VsCodeIcon />
            <Underline $x={5} $w={30} />
            <Underline $x={36} $w={8} $c="#5a8cb3" />
          </Slot>
          <Tray>
            <ResultIcon />
            <Gap $w={9} />
            <Label $ls={-0.26}>Result</Label>
            <Gap $w={26} />
            <Stroke w={12} h={8} d="M.7 7L6 1.500 11.300 7" c="#fff" s={1.3} />
            <Gap $w={9} />
            <VolumeIcon />
            <Gap $w={8} />
            <BatteryIcon />
            <Clock>
              <Label $ls={-0.26}>01:28</Label>
              <Label $ls={-0.1}>01-09-2024</Label>
            </Clock>
            <Gap $w={16} />
            <Stroke w={17} h={17} d="M.7 1h15.500v11.500H11L8.500 15.500 6 12.500H.7z" c="#fff" s={1.3} />
            <ShowDesktop />
          </Tray>
        </Taskbar>
        <FileDialog />
      </Screen>
    </>
  );
}
